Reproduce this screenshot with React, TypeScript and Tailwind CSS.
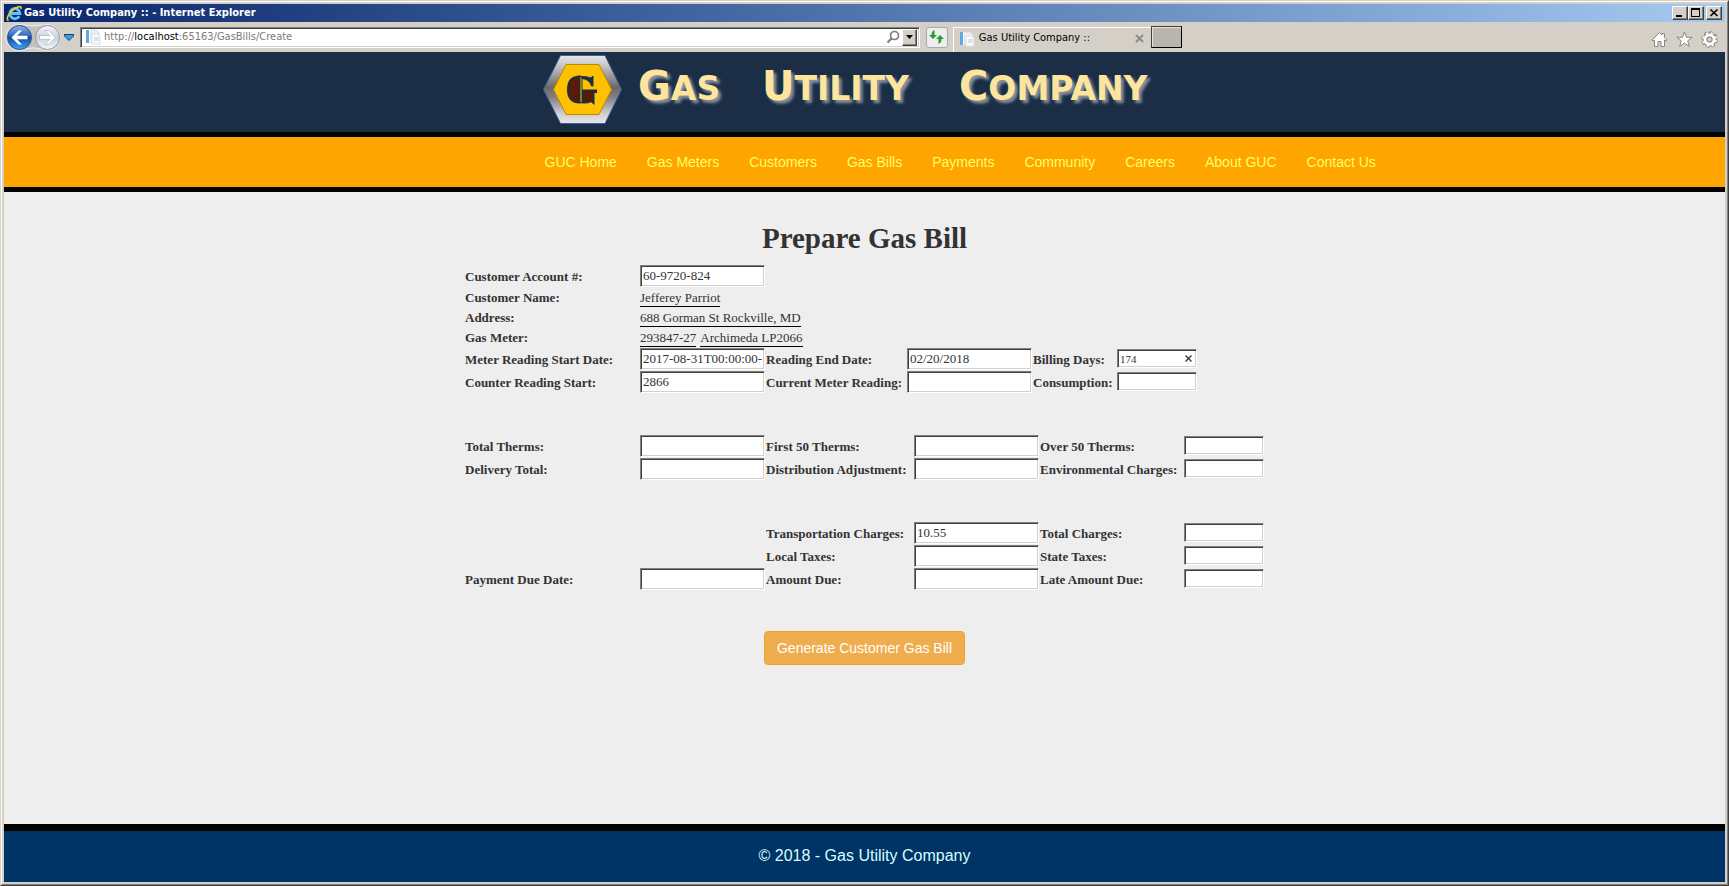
import type { ReactNode } from "react";

const serif = "font-['Liberation_Serif',serif]";
const sans = "font-['Liberation_Sans',sans-serif]";
const tahoma = "font-['DejaVu_Sans_Condensed','DejaVu_Sans',sans-serif]";

const sunken =
  "border border-t-[#808080] border-l-[#808080] border-r-white border-b-white shadow-[inset_1px_1px_#404040,inset_-1px_-1px_#d4d0c8]";
const raised =
  "border border-t-white border-l-white border-r-[#404040] border-b-[#404040] shadow-[inset_-1px_-1px_#808080] bg-[#d4d0c8]";

const navItems = [
  "GUC Home",
  "Gas Meters",
  "Customers",
  "Gas Bills",
  "Payments",
  "Community",
  "Careers",
  "About GUC",
  "Contact Us",
];

const PageIcon = () => (
  <svg width="16" height="16" viewBox="0 0 16 16" className="shrink-0">
    <path d="M5 1h6l3 3v9H5z" fill="#eef2f7" stroke="#d3dae3" />
    <path d="M7 5h6l2 2v8H7z" fill="#f8fafc" stroke="#d8dee6" />
    <path d="M9 9h5M9 11h5" stroke="#c3ccd6" />
    <path d="M1 1h3v13H1z" fill="#5fa9dc" />
    <path d="M4 1h1v13H4z" fill="#fff" />
  </svg>
);

const TitleBar = () => (
  <div className="flex h-[18px] items-center bg-linear-to-r from-[#0a246a] to-[#a6caf0] pr-[3px] pl-[2px]">
    <svg width="17" height="17" viewBox="0 0 17 17" className="shrink-0">
      <path
        d="M13.2 11.2a5 5 0 1 1 .7-2.7H5"
        fill="none"
        stroke="#5cc3f2"
        strokeWidth="3"
      />
      <path
        d="M2.6 15.6C-.8 14 3 7.6 8.5 3.8 12 1.4 15.8.5 15 4"
        fill="none"
        stroke="#f4c430"
        strokeWidth="1.7"
      />
    </svg>
    <span className={`${tahoma} ml-[1px] flex-1 text-[11px] font-bold whitespace-nowrap text-white`}>
      Gas Utility Company :: - Internet Explorer
    </span>
    <div className="flex">
      <button aria-label="Minimize" className={`h-[14px] w-4 ${raised}`}>
        <svg width="14" height="12" viewBox="0 0 14 12">
          <path d="M3 8h6v2H3z" />
        </svg>
      </button>
      <button aria-label="Maximize" className={`h-[14px] w-4 ${raised}`}>
        <svg width="14" height="12" viewBox="0 0 14 12">
          <path d="M2 1h9v9H2zM3 3v6h7V3z" fillRule="evenodd" />
        </svg>
      </button>
      <button aria-label="Close" className={`ml-[2px] h-[14px] w-4 ${raised}`}>
        <svg width="14" height="12" viewBox="0 0 14 12">
          <path d="M3.5 2.5l7 6.5M10.5 2.5l-7 6.5" stroke="#000" strokeWidth="1.7" />
        </svg>
      </button>
    </div>
  </div>
);

const BackForward = () => (
  <>
    <svg width="58" height="30" viewBox="0 0 58 30" className="shrink-0">
      <defs>
        <linearGradient id="back" x1="0" y1="0" x2="0" y2="1">
          <stop offset="0" stopColor="#8fb5e6" />
          <stop offset=".45" stopColor="#2a63b8" />
          <stop offset=".5" stopColor="#124a9f" />
          <stop offset="1" stopColor="#3fa9f5" />
        </linearGradient>
        <linearGradient id="forward" x1="0" y1="0" x2="0" y2="1">
          <stop offset="0" stopColor="#f4f7fa" />
          <stop offset=".5" stopColor="#c9d1da" />
          <stop offset="1" stopColor="#f5f8fb" />
        </linearGradient>
      </defs>
      <path
        d="M15 2.500a13 13 0 1 0 6 24.500q8-2.500 16 0A13 13 0 1 0 43 2.500q-14 3-28 0z"
        fill="#c4c1bb"
        stroke="#efede9"
      />
      <circle cx="15.500" cy="15.500" r="12" fill="url(#back)" stroke="#27559c" />
      <circle cx="43.500" cy="15.500" r="12" fill="url(#forward)" stroke="#8c98a6" />
      <path d="M7.5 15.500l7-7h3.500l-5 5.200h10.500v3.600H13l5 5.200h-3.500z" fill="#fff" />
      <path
        d="M51.500 15.500l-7-7H41l5 5.200H35.500v3.600H46l-5 5.200h3.500z"
        fill="#fff"
        stroke="#a9b2bd"
        strokeWidth=".7"
      />
    </svg>
    <svg width="10" height="7" viewBox="0 0 10 7" className="mr-[6px] ml-[2px] shrink-0">
      <path d="M.5.5h9v1.500L5 6.500.5 2z" fill="#36a3e0" stroke="#0b3c7a" />
    </svg>
  </>
);

const Toolbar = () => (
  <div className="flex h-[30px] items-center bg-[#d4d0c8] pr-[7px]">
    <BackForward />
    <div className={`flex h-[21px] w-[49%] items-center bg-white pr-[2px] pl-1 ${sunken}`}>
      <PageIcon />
      <span className={`${tahoma} ml-[3px] flex-1 text-[11px] whitespace-nowrap text-[#7a7a7a]`}>
        http://<span className="text-black">localhost</span>:65163/GasBills/Create
      </span>
      <svg width="14" height="14" viewBox="0 0 14 14" className="mr-[2px]">
        <circle cx="8.500" cy="5.500" r="4" fill="none" stroke="#7d7d7d" strokeWidth="1.700" />
        <path d="M5.500 8.500L1.500 12.500" stroke="#7d7d7d" strokeWidth="2.200" />
      </svg>
      <button aria-label="Show addresses" className={`flex h-[17px] w-[15px] items-center justify-center ${raised}`}>
        <svg width="7" height="4" viewBox="0 0 7 4">
          <path d="M0 0h7L3.500 4z" />
        </svg>
      </button>
    </div>
    <button
      aria-label="Refresh"
      className="ml-[6px] flex h-[21px] w-[22px] items-center justify-center rounded-[3px] border border-[#a5a8ad] bg-[#eceef0]"
    >
      <svg width="15" height="14" viewBox="0 0 15 14" fill="#2c9a2c">
        <path d="M5.500 0v5H8L4 9 0 5h2.500Q2.500 1 5.500 0z" />
        <path d="M9.500 14V9H7l4-4 4 4h-2.500q0 4-3 5z" />
      </svg>
    </button>
    <div
      className={`${tahoma} ml-[5px] flex h-[25px] w-[198px] items-center self-end border-t border-l border-white pr-[7px] pb-[3px] pl-[5px] text-[11px] text-black`}
    >
      <PageIcon />
      <span className="ml-1 flex-1 whitespace-nowrap">Gas Utility Company ::</span>
      <button aria-label="Close tab">
        <svg width="9" height="9" viewBox="0 0 9 9">
          <path d="M1 1l7 7M8 1L1 8" stroke="#8d8b85" strokeWidth="2" />
        </svg>
      </button>
    </div>
    <button
      aria-label="New tab"
      className="h-[22px] w-[31px] border border-t-[#404040] border-r-black border-b-black border-l-[#404040] bg-[#b9b5ac] shadow-[inset_1px_1px_#e4e2dd]"
    />
    <div className="ml-auto flex items-center gap-2 pt-1">
      <svg width="17" height="17" viewBox="0 0 17 17" fill="#fff" stroke="#8a8781">
        <path d="M1 9L8.500 1.500l2.500 2.500V2.500h2.500v4L16 9l-1 1-1.500-1v6.500h-3.500v-5H7v5H3.500V9L2 10z" />
      </svg>
      <svg width="17" height="17" viewBox="0 0 17 17" fill="#fff" stroke="#8a8781">
        <path d="M8.500 1l2 5.300h5.700l-4.500 3.500 1.700 5.700-4.900-3.400-4.900 3.400 1.700-5.700L.8 6.300h5.700z" />
      </svg>
      <svg width="17" height="17" viewBox="0 0 17 17">
        <circle cx="8.500" cy="8.500" r="6.600" fill="none" stroke="#8a8781" strokeWidth="3.400" strokeDasharray="3.200 1.980" />
        <circle cx="8.500" cy="8.500" r="4.500" fill="none" stroke="#8a8781" strokeWidth="5" />
        <circle cx="8.500" cy="8.500" r="6.500" fill="none" stroke="#fff" strokeWidth="2" strokeDasharray="2 3.105" strokeDashoffset="-.6" />
        <circle cx="8.500" cy="8.500" r="4.500" fill="none" stroke="#fff" strokeWidth="3" />
        <circle cx="8.500" cy="8.500" r="2.500" fill="#d4d0c8" stroke="#8a8781" />
      </svg>
    </div>
  </div>
);

const Logo = () => (
  <svg width="79" height="69" viewBox="0 0 79 69" className="shrink-0">
    <defs>
      <linearGradient id="steel" x1="0" y1="0" x2="0" y2="1">
        <stop offset="0" stopColor="#e6e6e8" />
        <stop offset=".15" stopColor="#c6c4c6" />
        <stop offset=".47" stopColor="#6d6868" />
        <stop offset=".62" stopColor="#858183" />
        <stop offset=".85" stopColor="#cfced0" />
        <stop offset="1" stopColor="#e8e8ea" />
      </linearGradient>
    </defs>
    <path d="M17.500.5h44.500l16.500 34-16.500 34H17.500L.5 34.500z" fill="url(#steel)" stroke="#3b5ba5" />
    <path d="M23 9.500h33l12.500 25L56 59.500H23l-12.500-25z" fill="#ffc000" stroke="#b88a00" />
    <path
      d="M37 21.500C28 21.500 25 27 25 34.500S28 47.500 37 47.500z"
      fill="#5c1a00"
      stroke="#1b2e46"
      strokeWidth="2"
    />
    <path d="M37 21.500h2v26h-2z" fill="#ffc000" stroke="#1b2e46" strokeWidth="1" />
    <path
      d="M39 21.500q6 0 8.500 1.500l2.500-2V31h-1.500q-2-7-9.500-7.500z"
      fill="#1b2e46"
      stroke="#1b2e46"
      strokeWidth="1"
    />
    <path
      d="M40 35.500h13v1.500h-2.500v11L48 46q-4 2-8 1.500z"
      fill="#5c1a00"
      stroke="#1b2e46"
      strokeWidth="2"
    />
  </svg>
);

const Header = () => (
  <header className="h-20 bg-[#1b2e46] pt-[3px]">
    <div className="mx-auto flex w-[643px] items-start">
      <Logo />
      <h1 className="ml-4 grid flex-1 grid-cols-[124px_197px_1fr] pt-[9px] font-['DejaVu_Sans',sans-serif] text-[33px] leading-[44px] font-bold text-[#ffe49c] uppercase [text-shadow:3px_3px_3px_#8a949e]">
        <span className="first-letter:text-[40px]">Gas</span>
        <span className="first-letter:text-[40px]">Utility</span>
        <span className="first-letter:text-[40px]">Company</span>
      </h1>
    </div>
  </header>
);

const Nav = () => (
  <nav className="border-y-5 border-black bg-[#ffa500]">
    <ul className={`${sans} mx-auto flex h-[50px] w-[640px] items-center gap-[30px] text-[14px] whitespace-nowrap`}>
      {navItems.map((item) => (
        <li key={item}>
          <a href="#" className="text-[#ffff66]">
            {item}
          </a>
        </li>
      ))}
    </ul>
  </nav>
);

type FieldProps = {
  label: string;
  value?: string;
  small?: boolean;
  children?: ReactNode;
};

const toId = (label: string) => label.toLowerCase().replace(/[^a-z0-9]+/g, "-");

const Field = ({ label, value = "", small, children }: FieldProps) => (
  <>
    <label htmlFor={toId(label)} className="pt-[2px] font-bold whitespace-nowrap">
      {label}
    </label>
    <div className="relative">
      <input
        id={toId(label)}
        type="text"
        defaultValue={value}
        className={
          small
            ? `block h-[19px] w-[80px] bg-white px-[2px] text-[11px] ${sunken}`
            : `block h-[22px] w-[125px] bg-white px-[2px] text-[13px] ${sunken}`
        }
      />
      {children}
    </div>
  </>
);

const Info = ({ label, values }: { label: string; values: string[] }) => (
  <div className="grid h-5 grid-cols-[175px_1fr] items-end">
    <span className="font-bold">{label}</span>
    <span className="flex gap-1">
      {values.map((value) => (
        <span key={value} className="border-b border-black leading-[17px]">
          {value}
        </span>
      ))}
    </span>
  </div>
);

const BillForm = () => (
  <form className={`${serif} mx-auto w-[799px] text-[13px] leading-[18px] text-[#333]`}>
    <div className="grid h-[23px] grid-cols-[175px_1fr] items-center">
      <Field label="Customer Account #:" value="60-9720-824" />
    </div>
    <Info label="Customer Name:" values={["Jefferey Parriot"]} />
    <Info label="Address:" values={["688 Gorman St Rockville, MD"]} />
    <Info label="Gas Meter:" values={["293847-27", "Archimeda LP2066"]} />
    <div className="grid auto-rows-[23px] grid-cols-[175px_126px_141px_126px_84px_80px] items-center">
      <Field label="Meter Reading Start Date:" value="2017-08-31T00:00:00-" />
      <Field label="Reading End Date:" value="02/20/2018" />
      <Field label="Billing Days:" value="174" small>
        <button type="button" aria-label="Clear" className="absolute top-[6px] right-[5px]">
          <svg width="7" height="7" viewBox="0 0 7 7" className="block">
            <path d="M.5.5l6 6M6.500.5l-6 6" stroke="#333" strokeWidth="1.300" />
          </svg>
        </button>
      </Field>
      <Field label="Counter Reading Start:" value="2866" />
      <Field label="Current Meter Reading:" />
      <Field label="Consumption:" small />
    </div>

    <div className="mt-[41px] grid auto-rows-[23px] grid-cols-[175px_126px_148px_126px_144px_80px] items-center">
      <Field label="Total Therms:" />
      <Field label="First 50 Therms:" />
      <Field label="Over 50 Therms:" small />
      <Field label="Delivery Total:" />
      <Field label="Distribution Adjustment:" />
      <Field label="Environmental Charges:" small />
    </div>

    <div className="mt-[41px] grid auto-rows-[23px] grid-cols-[175px_126px_148px_126px_144px_80px] items-center">
      <div className="col-span-2" />
      <Field label="Transportation Charges:" value="10.55" />
      <Field label="Total Charges:" small />
      <div className="col-span-2" />
      <Field label="Local Taxes:" />
      <Field label="State Taxes:" small />
      <Field label="Payment Due Date:" />
      <Field label="Amount Due:" />
      <Field label="Late Amount Due:" small />
    </div>

    <div className="mt-[41px] text-center">
      <button
        type="submit"
        className={`${sans} h-[34px] rounded border border-[#eea236] bg-[#f0ad4e] px-3 text-[14px] text-white`}
      >
        Generate Customer Gas Bill
      </button>
    </div>
  </form>
);

export default function App() {
  return (
    <div className="flex min-h-screen flex-col border border-t-[#d4d0c8] border-r-[#404040] border-b-[#404040] border-l-[#d4d0c8] bg-[#d4d0c8]">
      <div className="flex flex-1 flex-col border border-t-white border-r-[#808080] border-b-[#808080] border-l-white p-[2px]">
        <TitleBar />
        <Toolbar />
        <Header />
        <Nav />
        <main className="flex-1 bg-[#eee] pt-7">
          <h2 className={`${serif} mb-2 text-center text-[29px] leading-9 font-bold text-[#333]`}>
            Prepare Gas Bill
          </h2>
          <BillForm />
        </main>
        <footer
          className={`${sans} flex h-[58px] items-center justify-center border-t-7 border-black bg-[#003366] pb-[2px] text-[16px] text-[#d5ffff]`}
        >
          © 2018 - Gas Utility Company
        </footer>
      </div>
    </div>
  );
}
